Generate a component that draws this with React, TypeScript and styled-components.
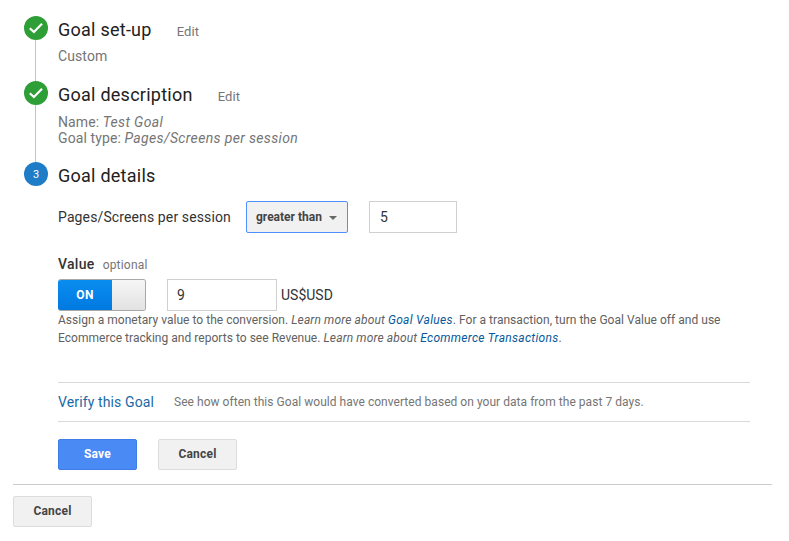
import { createGlobalStyle, styled } from 'styled-components';

const GlobalStyle = createGlobalStyle`
  html, body { margin: 0; padding: 0; background: #fff; }
  body { font-family: Roboto, "Liberation Sans", sans-serif; color: #333; }
`;

const Page = styled.div`
  width: 789px;
  height: 541px;
  overflow: hidden;
  padding: 16px 17px 0 13px;
  box-sizing: border-box;
`;

const Step = styled.section<{ $height?: number }>`
  display: flex;
  gap: 10px;
  padding-left: 11px;
  height: ${(p) => (p.$height ? `${p.$height}px` : 'auto')};
`;

const Rail = styled.div`
  width: 24px;
  flex: none;
  display: flex;
  flex-direction: column;
  align-items: center;
`;

const Line = styled.div`
  width: 1px;
  flex: 1;
  background: #c4c4c4;
  margin-left: -1px;
`;

const Circle = styled.div<{ $bg: string }>`
  width: 24px;
  height: 24px;
  flex: none;
  border-radius: 50%;
  background: ${(p) => p.$bg};
  color: #fff;
  font-size: 11px;
  display: flex;
  align-items: center;
  justify-content: center;
`;

const Body = styled.div`
  flex: 1;
  min-width: 0;
`;

const TitleRow = styled.div`
  display: flex;
  align-items: baseline;
  height: 28px;
`;

const Title = styled.h2`
  margin: 0;
  font-size: 18px;
  line-height: 28px;
  font-weight: 400;
  letter-spacing: 0.25px;
  color: #212121;
`;

const Edit = styled.span`
  margin-left: 25px;
  font-size: 13px;
  letter-spacing: 0.1px;
  color: #757575;
`;

const Summary = styled.div<{ $top: number }>`
  margin-top: ${(p) => p.$top}px;
  font-size: 14px;
  line-height: 16px;
  letter-spacing: 0.1px;
  color: #757575;
  em { font-style: italic; letter-spacing: 0.35px; }
`;

const Criteria = styled.div`
  display: flex;
  align-items: center;
  margin-top: 11px;
`;

const FieldLabel = styled.span`
  width: 188px;
  font-size: 14px;
  letter-spacing: 0.12px;
  color: #333;
`;

const Select = styled.div`
  width: 102px;
  height: 32px;
  box-sizing: border-box;
  background: #f1f1f1;
  border: 1px solid #4d90fe;
  border-radius: 2px;
  display: flex;
  align-items: center;
  padding-left: 9px;
  gap: 7px;
  font-size: 12px;
  font-weight: 700;
  color: #444;
`;

const Caret = styled.span`
  width: 0;
  height: 0;
  border-left: 4px solid transparent;
  border-right: 4px solid transparent;
  border-top: 4px solid #666;
  margin-top: 1px;
`;

const TextInput = styled.div<{ $width: number; $pad: number; $left: number }>`
  width: ${(p) => p.$width}px;
  height: 32px;
  margin-left: ${(p) => p.$left}px;
  box-sizing: border-box;
  border: 1px solid #d0d0d0;
  padding-left: ${(p) => p.$pad}px;
  display: flex;
  align-items: center;
  font-size: 14px;
  color: #333;
`;

const ValueHead = styled.div`
  display: flex;
  align-items: baseline;
  gap: 8px;
  margin-top: 23px;
  line-height: 16px;
`;

const ValueLabel = styled.span`
  font-size: 14px;
  font-weight: 500;
  letter-spacing: 0.3px;
  color: #333;
`;

const Optional = styled.span`
  font-size: 12px;
  letter-spacing: 0.2px;
  color: #757575;
`;

const ValueRow = styled.div`
  display: flex;
  align-items: center;
  margin-top: 6px;
`;

const Toggle = styled.div`
  width: 88px;
  height: 32px;
  box-sizing: border-box;
  display: flex;
  border-radius: 3px;
  overflow: hidden;
  border: 1px solid #a8a8a8;
  border-left: 0;
`;

const ToggleOn = styled.div`
  width: 54px;
  background: linear-gradient(#0a8df0, #0079e0);
  color: #fff;
  font-size: 12px;
  font-weight: 700;
  letter-spacing: 0.4px;
  display: flex;
  align-items: center;
  justify-content: center;
`;

const ToggleKnob = styled.div`
  flex: 1;
  background: linear-gradient(#f6f6f6, #e2e2e2);
`;

const Currency = styled.span`
  margin-left: 4px;
  font-size: 14px;
  color: #333;
`;

const Help = styled.p`
  margin: 0;
  width: 690px;
  font-size: 12px;
  line-height: 18px;
  letter-spacing: 0.03px;
  color: #616161;
  em { font-style: italic; letter-spacing: 0.13px; }
`;

const Link = styled.a`
  color: #05599a;
  font-style: italic;
  letter-spacing: 0.3px;
`;

const Verify = styled.div`
  margin-top: 35px;
  width: 692px;
  height: 38px;
  border-top: 1px solid #d9d9d9;
  border-bottom: 1px solid #d9d9d9;
  display: flex;
  align-items: center;
`;

const VerifyLink = styled.span`
  width: 116px;
  font-size: 14px;
  letter-spacing: 0.12px;
  color: #1a6aa5;
`;

const VerifyText = styled.span`
  font-size: 12px;
  letter-spacing: 0.04px;
  color: #757575;
`;

const Actions = styled.div`
  display: flex;
  gap: 21px;
  margin-top: 17px;
`;

const Button = styled.button<{ $primary?: boolean }>`
  width: 79px;
  height: 31px;
  padding: 0 0 1px;
  box-sizing: border-box;
  border-radius: 2px;
  border: 1px solid ${(p) => (p.$primary ? '#3d7fe6' : '#dcdcdc')};
  background: ${(p) => (p.$primary ? '#4a8af4' : '#f1f1f1')};
  color: ${(p) => (p.$primary ? '#fff' : '#444')};
  font-family: Roboto, "Liberation Sans", sans-serif;
  font-size: 12px;
  font-weight: 700;
  letter-spacing: 0.2px;
`;

const Footer = styled.div`
  margin-top: 14px;
  width: 759px;
  border-top: 1px solid #ccc;
  padding-top: 11px;
`;

const Check = () => (
  <svg width="14" height="14" viewBox="0 0 14 14" fill="none">
    <path d="M0.8 7.3 L4.9 11 L13 2.8" stroke="#fff" strokeWidth="2.2" />
  </svg>
);

const App = () => (
  <Page>
    <GlobalStyle />
    <Step $height={65}>
      <Rail>
        <Circle $bg="#2e9e36"><Check /></Circle>
        <Line />
      </Rail>
      <Body>
        <TitleRow>
          <Title>Goal set-up</Title>
          <Edit>Edit</Edit>
        </TitleRow>
        <Summary $top={4}>Custom</Summary>
      </Body>
    </Step>
    <Step $height={81}>
      <Rail>
        <Circle $bg="#2e9e36"><Check /></Circle>
        <Line />
      </Rail>
      <Body>
        <TitleRow>
          <Title>Goal description</Title>
          <Edit>Edit</Edit>
        </TitleRow>
        <Summary $top={5}>
          Name: <em>Test Goal</em>
          <br />
          Goal type: <em>Pages/Screens per session</em>
        </Summary>
      </Body>
    </Step>
    <Step>
      <Rail>
        <Circle $bg="#1f7cc7">3</Circle>
      </Rail>
      <Body>
        <TitleRow>
          <Title>Goal details</Title>
        </TitleRow>
        <Criteria>
          <FieldLabel>Pages/Screens per session</FieldLabel>
          <Select>
            greater than
            <Caret />
          </Select>
          <TextInput $width={88} $pad={10} $left={21}>5</TextInput>
        </Criteria>
        <ValueHead>
          <ValueLabel>Value</ValueLabel>
          <Optional>optional</Optional>
        </ValueHead>
        <ValueRow>
          <Toggle>
            <ToggleOn>ON</ToggleOn>
            <ToggleKnob />
          </Toggle>
          <TextInput $width={110} $pad={9} $left={21}>9</TextInput>
          <Currency>US$USD</Currency>
        </ValueRow>
        <Help>
          Assign a monetary value to the conversion. <em>Learn more about</em> <Link>Goal Values</Link>. For a
          transaction, turn the Goal Value off and use Ecommerce tracking and reports to see Revenue.{' '}
          <em>Learn more about</em> <Link>Ecommerce Transactions</Link>.
        </Help>
        <Verify>
          <VerifyLink>Verify this Goal</VerifyLink>
          <VerifyText>See how often this Goal would have converted based on your data from the past 7 days.</VerifyText>
        </Verify>
        <Actions>
          <Button $primary>Save</Button>
          <Button>Cancel</Button>
        </Actions>
      </Body>
    </Step>
    <Footer>
      <Button>Cancel</Button>
    </Footer>
  </Page>
);

export default App;
